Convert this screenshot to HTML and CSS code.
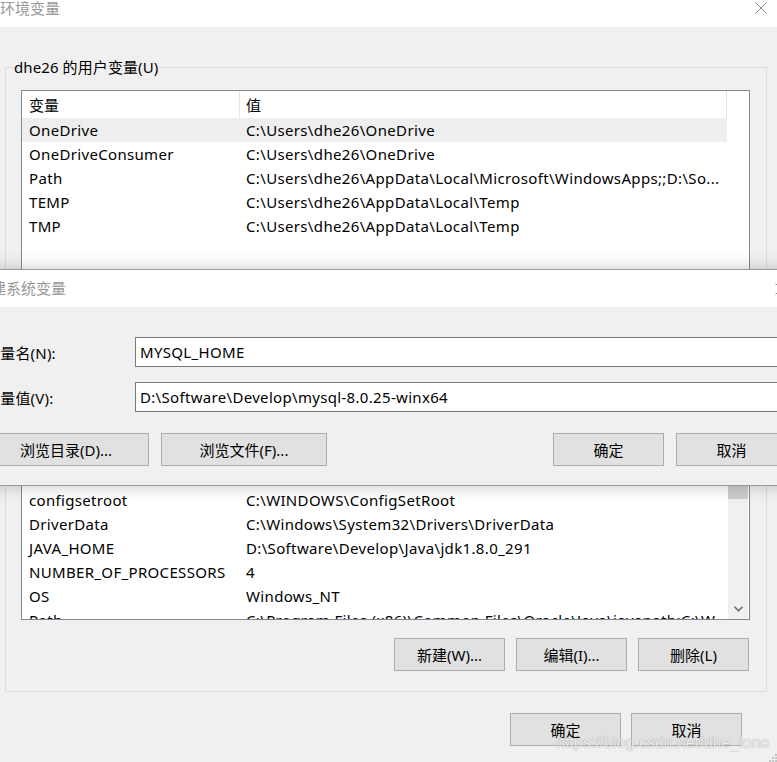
FILE: index.html
```html
<!DOCTYPE html>
<html lang="zh-CN">
<head>
<meta charset="utf-8">
<title>环境变量</title>
<link rel="stylesheet" href="styles.css">
</head>
<body>
<div class="win">
  <div class="titlebar">
    <span class="title">环境变量</span>
    <svg class="close" width="12" height="12" viewBox="0 0 12 12"><path d="M0.5 0.5L11.5 11.5M11.5 0.5L0.5 11.5" stroke="#8a8a8a" stroke-width="1" fill="none"/></svg>
  </div>
  <div class="body">
    <div class="group">
      <div class="legend">dhe26 的用户变量(U)</div>
      <div class="list user">
        <div class="lv">
          <div class="lv-head"><div class="c1">变量</div><div class="c2">值</div></div>
          <div class="row sel"><div class="c1">OneDrive</div><div class="c2">C:\Users\dhe26\OneDrive</div></div>
          <div class="row"><div class="c1">OneDriveConsumer</div><div class="c2">C:\Users\dhe26\OneDrive</div></div>
          <div class="row"><div class="c1">Path</div><div class="c2">C:\Users\dhe26\AppData\Local\Microsoft\WindowsApps;;D:\So...</div></div>
          <div class="row"><div class="c1">TEMP</div><div class="c2">C:\Users\dhe26\AppData\Local\Temp</div></div>
          <div class="row"><div class="c1">TMP</div><div class="c2">C:\Users\dhe26\AppData\Local\Temp</div></div>
        </div>
      </div>
      <div class="btnrow">
        <div class="btn">新建(N)...</div>
        <div class="btn">编辑(E)...</div>
        <div class="btn">删除(D)</div>
      </div>
    </div>
    <div class="group second">
      <div class="legend">系统变量(S)</div>
      <div class="list sys">
        <div class="lv">
          <div class="lv-head"><div class="c1">变量</div><div class="c2">值</div></div>
          <div class="row"><div class="c1">ComSpec</div><div class="c2">C:\WINDOWS\system32\cmd.exe</div></div>
          <div class="row"><div class="c1">configsetroot</div><div class="c2">C:\WINDOWS\ConfigSetRoot</div></div>
          <div class="row"><div class="c1">DriverData</div><div class="c2">C:\Windows\System32\Drivers\DriverData</div></div>
          <div class="row"><div class="c1">JAVA_HOME</div><div class="c2">D:\Software\Develop\Java\jdk1.8.0_291</div></div>
          <div class="row"><div class="c1">NUMBER_OF_PROCESSORS</div><div class="c2">4</div></div>
          <div class="row"><div class="c1">OS</div><div class="c2">Windows_NT</div></div>
          <div class="row"><div class="c1">Path</div><div class="c2">C:\Program Files (x86)\Common Files\Oracle\Java\javapath;C:\W...</div></div>
        </div>
        <div class="gap1"></div>
        <div class="vscroll">
          <div class="sb-arrow"></div>
          <div class="sb-thumb"></div>
          <div class="sb-track"></div>
          <div class="sb-arrow">
            <svg width="9" height="6" viewBox="0 0 9 6"><path d="M0.5 0.75L4.5 4.75L8.5 0.75" fill="none" stroke="#606060" stroke-width="1.5"/></svg>
          </div>
        </div>
      </div>
      <div class="btnrow">
        <div class="btn">新建(W)...</div>
        <div class="btn">编辑(I)...</div>
        <div class="btn">删除(L)</div>
      </div>
    </div>
    <div class="footer">
      <div class="btn">确定</div>
      <div class="btn">取消</div>
    </div>
  </div>

  <div class="dialog">
    <div class="d-title">
      <span class="title">新建系统变量</span>
      <svg class="d-close" width="12" height="12" viewBox="0 0 12 12"><path d="M0.5 0.5L11.5 11.5M11.5 0.5L0.5 11.5" stroke="#8a8a8a" stroke-width="1" fill="none"/></svg>
    </div>
    <div class="d-body">
      <div class="field">
        <div class="label">变量名(N):</div>
        <div class="input">MYSQL_HOME</div>
      </div>
      <div class="field second">
        <div class="label">变量值(V):</div>
        <div class="input">D:\Software\Develop\mysql-8.0.25-winx64</div>
      </div>
      <div class="d-buttons">
        <div class="btn wide">浏览目录(D)...</div>
        <div class="btn wide">浏览文件(F)...</div>
        <div class="spacer"></div>
        <div class="btn">确定</div>
        <div class="btn">取消</div>
      </div>
    </div>
  </div>

  <div class="watermark">https://blog.csdn.net/dhe_lone</div>
  <svg class="grip" width="9" height="9" viewBox="0 0 9 9">
    <rect x="7" y="1" width="2" height="2" fill="#c4c4c4"/>
    <rect x="7" y="4" width="2" height="2" fill="#c4c4c4"/>
    <rect x="4" y="4" width="2" height="2" fill="#c4c4c4"/>
    <rect x="7" y="7" width="2" height="2" fill="#c4c4c4"/>
    <rect x="4" y="7" width="2" height="2" fill="#c4c4c4"/>
    <rect x="1" y="7" width="2" height="2" fill="#c4c4c4"/>
  </svg>
</div>
</body>
</html>
```

FILE: styles.css
```css
html, body {
  margin: 0;
  padding: 0;
  overflow: hidden;
}
body {
  width: 777px;
  height: 762px;
  font-family: "Noto Sans", "Noto Sans CJK SC", sans-serif;
  font-size: 15px;
  color: #000;
  background: #f0f0f0;
}
.win {
  position: relative;
  width: 777px;
  height: 762px;
  overflow: hidden;
  background: #f0f0f0;
}

/* back window title bar */
.titlebar {
  height: 27px;
  background: #fff;
  display: flex;
  align-items: flex-start;
  justify-content: space-between;
}
.title {
  color: #999;
  font-size: 15px;
  line-height: 17px;
  white-space: nowrap;
}
.close {
  margin-top: 2px;
  margin-right: 10px;
}

.body {
  padding-top: 40px;
}

/* group boxes */
.group {
  margin: 0 10px 0 5px;
  border: 1px solid #dcdcdc;
  padding-bottom: 21px;
}
.group.second {
  margin-top: 20px;
  padding-bottom: 20px;
}
.legend {
  width: fit-content;
  height: 20px;
  line-height: 20px;
  margin: -11px 0 0 7px;
  padding: 0 1px;
  background: #f0f0f0;
  white-space: nowrap;
  letter-spacing: 0.1px;
}

/* list views */
.list {
  margin: 13px 16px 0 15px;
  border: 1px solid #828790;
  background: #fff;
  box-sizing: border-box;
  overflow: hidden;
  display: flex;
}
.list.user {
  height: 229px;
}
.list.sys {
  height: 184px;
}
.lv {
  width: 705px;
  flex: none;
}
.lv-head {
  display: flex;
  height: 27px;
  align-items: stretch;
}
.lv-head .c1 {
  border-right: 1px solid #e5e5e5;
}
.lv-head .c2 {
  border-right: 1px solid #e5e5e5;
}
.lv-head > div {
  display: flex;
  align-items: center;
  letter-spacing: 0;
}
.row {
  display: flex;
  height: 24px;
  align-items: center;
}
.row.sel {
  background: #eeeeee;
}
.c1 {
  width: 218px;
  flex: none;
  box-sizing: border-box;
  padding-left: 7px;
  white-space: nowrap;
  overflow: hidden;
  letter-spacing: 0.33px;
}
.c2 {
  flex: 1;
  min-width: 0;
  box-sizing: border-box;
  padding-left: 6px;
  white-space: nowrap;
  overflow: hidden;
  letter-spacing: 0.35px;
}
.gap1 {
  width: 1px;
  flex: none;
}
.vscroll {
  width: 20px;
  flex: none;
  background: #f0f0f0;
  display: flex;
  flex-direction: column;
}
.sb-arrow {
  height: 21px;
  flex: none;
  display: flex;
  align-items: center;
  justify-content: center;
}
.sb-thumb {
  height: 41px;
  flex: none;
  background: #cdcdcd;
}
.sb-track {
  flex: 1;
}

/* buttons */
.btnrow {
  display: flex;
  justify-content: flex-end;
  gap: 11px;
  margin-top: 19px;
  padding-right: 17px;
}
.group.second .btnrow {
  margin-top: 18px;
}
.btn {
  width: 111px;
  height: 33px;
  box-sizing: border-box;
  border: 1px solid #adadad;
  background: #e1e1e1;
  display: flex;
  align-items: center;
  justify-content: center;
  white-space: nowrap;
  flex: none;
}
.footer {
  display: flex;
  justify-content: flex-end;
  gap: 10px;
  margin-top: 21px;
  padding-right: 35px;
}

/* front dialog */
.dialog {
  position: absolute;
  top: 269px;
  left: -29px;
  width: 827px;
  box-sizing: border-box;
  border: 1px solid #9a9a9a;
  background: #f0f0f0;
  box-shadow: 0 0 16px rgba(0, 0, 0, 0.22);
}
.d-title {
  height: 37px;
  background: #fff;
  display: flex;
  align-items: center;
  justify-content: space-between;
  padding-left: 4px;
}
.d-close {
  margin-right: 10px;
}
.d-body {
  padding: 30px 10px 19px 11px;
}
.field {
  display: flex;
  height: 30px;
  align-items: center;
}
.field.second {
  margin-top: 15px;
}
.label {
  width: 152px;
  flex: none;
  box-sizing: border-box;
  padding-left: 2px;
  white-space: nowrap;
  letter-spacing: 0.2px;
}
.input {
  flex: 1;
  height: 30px;
  box-sizing: border-box;
  border: 1px solid #7a7a7a;
  background: #fff;
  padding-left: 4px;
  line-height: 28px;
  white-space: nowrap;
  letter-spacing: 0.32px;
}
.d-buttons {
  display: flex;
  margin-top: 21px;
  gap: 12px;
}
.d-buttons .btn.wide {
  width: 166px;
}
.d-buttons .spacer {
  flex: 1;
}

/* overlay details */
.watermark {
  position: absolute;
  left: 556px;
  top: 734px;
  font-family: "Liberation Sans", sans-serif;
  font-size: 16px;
  line-height: 18px;
  color: rgba(255, 255, 255, 0.85);
  text-shadow: 0 0 1px rgba(0, 0, 0, 0.45);
  white-space: nowrap;
}
.grip {
  position: absolute;
  right: 0;
  bottom: 0;
}
```
